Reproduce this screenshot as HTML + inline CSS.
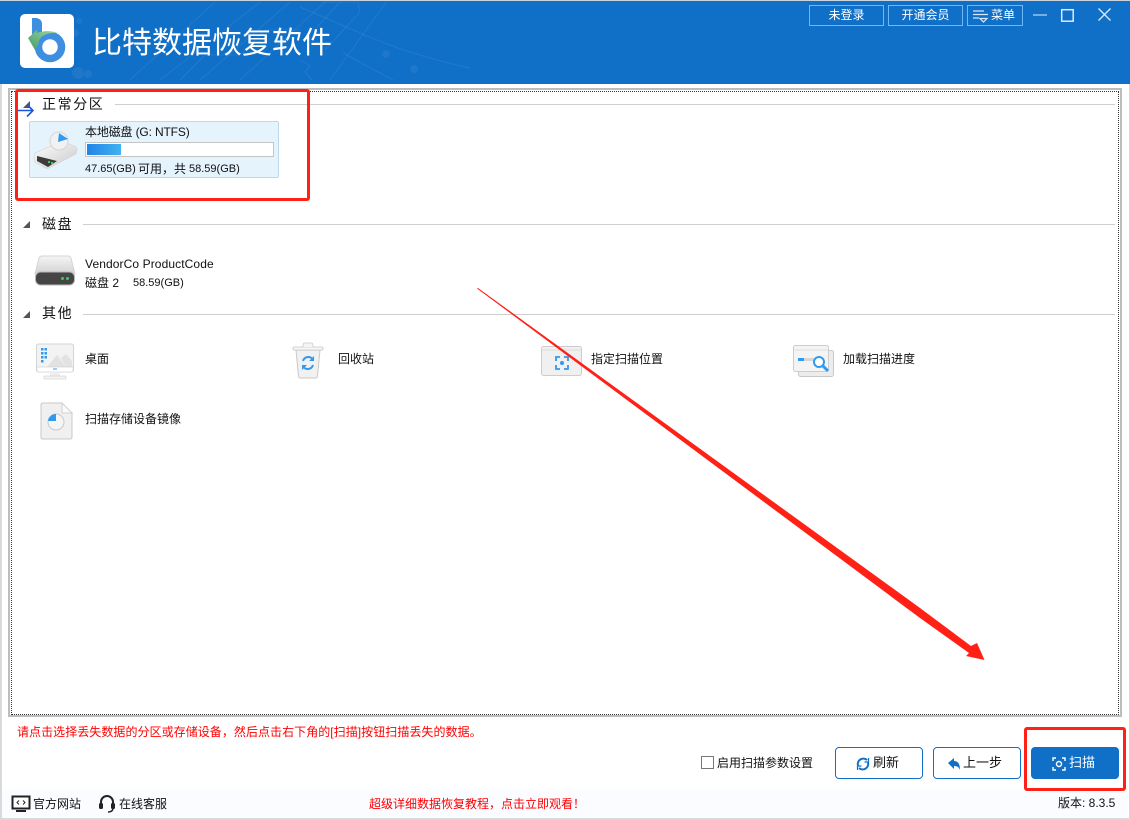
<!DOCTYPE html>
<html lang="zh">
<head>
<meta charset="utf-8">
<title>比特数据恢复软件</title>
<style>
html,body{margin:0;padding:0;background:#fff}
#app{position:relative;width:1130px;height:820px;overflow:hidden;background:#fff;font-family:"Liberation Sans","Noto Sans CJK SC",sans-serif;font-size:12px;color:#111}
#app div,#app span.t{position:absolute;white-space:nowrap;box-sizing:border-box}
.t{line-height:16px;height:16px}
.sec{font-size:14px;letter-spacing:1.6px;line-height:20px;height:20px}
.line{height:1px;background:#cfcfcf;right:15px}
.tri{width:0;height:0;border-style:solid;border-width:0 0 7px 7px;border-color:transparent transparent #555 transparent}
.topbtn{top:5px;height:21px;border:1px solid #6db8f5;color:#fff;text-align:center;line-height:19px;font-size:12px}
.btn{top:747px;width:88px;height:32px;border:1px solid #106fc7;border-radius:4px;background:#fff;line-height:30px;font-size:13px}
</style>
</head>
<body>
<div id="app">
  <!-- window frame -->
  <div style="left:0;top:0;width:1130px;height:820px;border:1px solid #d9d9d9;border-width:0 1px 2px 2px"></div>
  <!-- footer tint -->
  <div style="left:2px;top:786px;width:1127px;height:32px;background:linear-gradient(#fff,#fafcff 20%)"></div>

  <!-- header -->
  <div style="left:0;top:0;width:1130px;height:84px;background:#106fc7;border-top:1px solid #c9d4de"></div>
  <svg style="position:absolute;left:0;top:0" width="1130" height="84" viewBox="0 0 1130 84">
    <g fill="none" stroke="#fff" stroke-opacity=".08" stroke-width="1">
      <path d="M130 80L215 2M160 80L260 2M200 80L290 2M240 80L325 2"/>
      <path d="M300 7L360 33Q410 55 470 68"/>
      <path d="M387 1L330 80"/>
      <path d="M317 27L340 2M322 2L358 2L360 12L325 50"/>
      <path d="M343 53L393 80"/>
      <path d="M180 80L205 55L240 55L265 30L300 30"/>
      <path d="M300 60L310 66L305 72L312 80"/>
    </g>
    <g fill="#fff" fill-opacity=".06">
      <circle cx="79" cy="21" r="3"/><circle cx="75" cy="33" r="4"/><circle cx="78" cy="73" r="6"/><circle cx="88" cy="74" r="4"/><circle cx="386" cy="54" r="4"/><circle cx="414" cy="69" r="4"/>
    </g>
  </svg>
  <!-- logo -->
  <svg style="position:absolute;left:20px;top:14px" width="54" height="54" viewBox="0 0 54 54">
    <defs><linearGradient id="g" x1="0" y1="1" x2="1" y2="0"><stop offset="0" stop-color="#3f9c6e"/><stop offset="1" stop-color="#a6d79a"/></linearGradient></defs>
    <rect width="54" height="54" rx="5" fill="#fff"/>
    <path d="M12 4h4a6 6 0 0 1 6 6v14h-10z" fill="#3f8fe0"/>
    <circle cx="30" cy="33" r="11.500" fill="none" stroke="#3f8fe0" stroke-width="7.500"/>
    <path d="M8 24l9-8v3c8-3 15-2 21 0-7-.5-12 .5-16 3.500-2.500 2-3.500 5-4 8.500l-3 5z" fill="url(#g)"/>
  </svg>
  <div style="left:92px;top:24px;font-size:30px;line-height:40px;height:40px;color:#fff">比特数据恢复软件</div>

  <div class="topbtn" style="left:809px;width:75px">未登录</div>
  <div class="topbtn" style="left:888px;width:75px">开通会员</div>
  <div class="topbtn" style="left:967px;width:56px;padding-left:16px">菜单</div>
  <svg style="position:absolute;left:972px;top:9px" width="18" height="15" viewBox="0 0 18 15" fill="none" stroke="#d7e8f8" stroke-width="1.200">
    <path d="M1 2h11M1 5.500h15M1 9h6"/><path d="M8 9.500h7l-3.500 3.500z"/>
  </svg>
  <svg style="position:absolute;left:1030px;top:5px" width="90" height="20" viewBox="0 0 90 20" fill="none" stroke="#dceafa" stroke-width="1.300">
    <path d="M3 10h14" stroke="#9cc6ec" stroke-width="1.500"/>
    <rect x="31.700" y="4.700" width="11.500" height="11.500" stroke-width="1.500"/>
    <path d="M68.500 3.500l12 12M80.500 3.500l-12 12"/>
  </svg>

  <!-- main panel -->
  <div style="left:8px;top:88px;width:1114px;height:629px;border:2px solid #bdbdbd"></div>
  <div style="left:11px;top:91px;width:1108px;height:624px;border:1px dotted #333"></div>

  <!-- section 1 -->
  <div class="tri" style="left:23px;top:101px"></div>
  <div class="sec" style="left:42px;top:94px">正常分区</div>
  <div class="line" style="left:115px;top:104px"></div>
  <div style="left:29px;top:121px;width:250px;height:57px;background:#e5f3fd;border:1px solid #bcd8ef;border-radius:2px"></div>
  <svg style="position:absolute;left:32px;top:130px" width="46" height="40" viewBox="0 0 46 40">
    <defs><linearGradient id="d1" x1="0" y1="0" x2="1" y2="1"><stop offset="0" stop-color="#fff"/><stop offset="1" stop-color="#c9c9c9"/></linearGradient></defs>
    <path d="M3 23L28 12Q30 11 33 12L44 17Q46 19 44 24L17 38Q15 39 13 38L3 32Q1 28 3 23Z" fill="url(#d1)" stroke="#d2d2d2" stroke-width=".6"/>
    <path d="M5 26L25 31L16 37L5 31Z" fill="#3b3b3b"/>
    <rect x="16" y="31" width="2" height="2" fill="#3bd04a"/><rect x="19" y="32" width="2" height="2" fill="#3bd04a"/>
    <circle cx="27" cy="11" r="9" fill="#f1f1f1" stroke="#d5d5d5"/>
    <path d="M27 3L36 9L26 12Z" fill="#2f9af0"/>
  </svg>
  <span class="t" style="left:85px;top:124px;letter-spacing:-.15px">本地磁盘 (G: NTFS)</span>
  <div style="left:85px;top:142px;width:189px;height:15px;background:#fff;border:1px solid #c4c4c4"></div>
  <div style="left:87px;top:144px;width:34px;height:11px;background:linear-gradient(90deg,#2283e6,#3fb3f2)"></div>
  <span class="t" style="left:85px;top:161px;font-size:11px">47.65(GB)</span>
  <span class="t" style="left:138px;top:161px">可用，共</span>
  <span class="t" style="left:189px;top:161px;font-size:11px">58.59(GB)</span>

  <!-- section 2 -->
  <div class="tri" style="left:23px;top:221px"></div>
  <div class="sec" style="left:42px;top:214px">磁盘</div>
  <div class="line" style="left:83px;top:224px"></div>
  <svg style="position:absolute;left:34px;top:255px" width="42" height="32" viewBox="0 0 42 32">
    <defs><linearGradient id="d2" x1="0" y1="0" x2="0" y2="1"><stop offset="0" stop-color="#f5f5f5"/><stop offset="1" stop-color="#d2d2d2"/></linearGradient></defs>
    <path d="M8 1h26q2 0 3 2l4 16H1L5 3q1-2 3-2z" fill="url(#d2)" stroke="#d5d5d5"/>
    <rect x="1.500" y="17" width="39" height="13" rx="5" fill="#454545" stroke="#b8b8b8"/>
    <rect x="27" y="22" width="3" height="3" rx="1.500" fill="#3bd04a"/><rect x="32" y="22" width="3" height="3" rx="1.500" fill="#3bd04a"/>
  </svg>
  <span class="t" style="left:85px;top:256px;letter-spacing:.1px">VendorCo ProductCode</span>
  <span class="t" style="left:85px;top:275px">磁盘 2</span>
  <span class="t" style="left:133px;top:275px;font-size:11px">58.59(GB)</span>

  <!-- section 3 -->
  <div class="tri" style="left:23px;top:311px"></div>
  <div class="sec" style="left:42px;top:303px">其他</div>
  <div class="line" style="left:83px;top:314px"></div>

  <svg style="position:absolute;left:35px;top:343px" width="40" height="37" viewBox="0 0 40 37">
    <rect x="1.500" y="1" width="37" height="28" rx="2" fill="#f3f3f3" stroke="#d5d5d5"/>
    <path d="M12 24l10-12 9 12zM26 15l5-4 6 7v6h-6z" fill="#e2e2e2"/>
    <path d="M2 24h36v3a2 2 0 0 1-2 2H4a2 2 0 0 1-2-2z" fill="#fff" stroke="#d5d5d5" stroke-width=".7"/>
    <rect x="18" y="25.500" width="4" height="1" fill="#2f9af0"/>
    <rect x="15" y="29" width="10" height="4" fill="#eee"/><rect x="9" y="33" width="22" height="3" rx="1" fill="#f3f3f3" stroke="#d5d5d5" stroke-width=".7"/>
    <g fill="#2f9af0"><rect x="6" y="5" width="2.500" height="2.500"/><rect x="9.500" y="5" width="2.500" height="2.500"/><rect x="6" y="9" width="2.500" height="2.500"/><rect x="9.500" y="9" width="2.500" height="2.500"/><rect x="6" y="13" width="2.500" height="2.500"/><rect x="9.500" y="13" width="2.500" height="2.500"/><rect x="6" y="17" width="2.500" height="2.500"/></g>
  </svg>
  <span class="t" style="left:85px;top:351px">桌面</span>

  <svg style="position:absolute;left:292px;top:342px" width="32" height="37" viewBox="0 0 32 37">
    <path d="M4 8h24l-2.500 26q-.2 2-2 2H8.500q-1.800 0-2-2z" fill="#f1f1f1" stroke="#c9c9c9"/>
    <rect x="1" y="5" width="30" height="3" rx="1" fill="#f8f8f8" stroke="#c4c4c4" stroke-width=".8"/>
    <path d="M11 5V3q0-2 2-2h6q2 0 2 2v2" fill="#f5f5f5" stroke="#c9c9c9" stroke-width=".8"/>
    <path d="M11 19a5.500 5.500 0 0 1 9.500-2M21 23a5.500 5.500 0 0 1-9.500 2" fill="none" stroke="#2f9af0" stroke-width="2"/>
    <path d="M22 14v5h-5zM10 28v-5h5z" fill="#2f9af0"/>
  </svg>
  <span class="t" style="left:338px;top:351px">回收站</span>

  <svg style="position:absolute;left:541px;top:346px" width="42" height="31" viewBox="0 0 42 31">
    <rect x=".500" y=".500" width="40" height="29" rx="2" fill="#f0f0f0" stroke="#cdcdcd"/>
    <path d="M1 4h39" stroke="#dcdcdc"/>
    <g fill="none" stroke="#2f9af0" stroke-width="1.800"><path d="M15 15v-4h4M23 11h4v4M27 19v4h-4M19 23h-4v-4"/></g>
    <circle cx="21" cy="17" r="2" fill="#2f9af0"/>
  </svg>
  <span class="t" style="left:591px;top:351px">指定扫描位置</span>

  <svg style="position:absolute;left:793px;top:345px" width="42" height="33" viewBox="0 0 42 33">
    <rect x="5.500" y="5.500" width="35" height="26" rx="2" fill="#ececec" stroke="#c9c9c9"/>
    <rect x=".500" y=".500" width="35" height="26" rx="2" fill="#f4f4f4" stroke="#cdcdcd"/>
    <path d="M1 5h34" stroke="#dedede"/>
    <rect x="5" y="13" width="6" height="3" fill="#2f9af0"/><rect x="11" y="13" width="10" height="3" fill="#d6d6d6"/>
    <circle cx="26" cy="17" r="5" fill="#fff" stroke="#2f9af0" stroke-width="2"/>
    <path d="M30 21l5 5" stroke="#2f9af0" stroke-width="3"/>
  </svg>
  <span class="t" style="left:843px;top:351px">加载扫描进度</span>

  <svg style="position:absolute;left:40px;top:402px" width="34" height="38" viewBox="0 0 34 38">
    <path d="M3 1h19l10 10v24q0 2-2 2H3q-2 0-2-2V3q0-2 2-2z" fill="#f0f0f0" stroke="#c9c9c9"/>
    <path d="M22 1v10h10z" fill="#fafafa" stroke="#d2d2d2"/>
    <circle cx="16" cy="20" r="8" fill="#f6f6f6" stroke="#c9c9c9"/>
    <path d="M8 18a8 8 0 0 1 8-7v7z" fill="#2f9af0" transform="translate(0 1)"/>
  </svg>
  <span class="t" style="left:85px;top:411px">扫描存储设备镜像</span>

  <!-- hint -->
  <span class="t" style="left:17px;top:724px;color:#f00;letter-spacing:.05px">请点击选择丢失数据的分区或存储设备，然后点击右下角的[扫描]按钮扫描丢失的数据。</span>

  <!-- bottom actions -->
  <div style="left:701px;top:756px;width:13px;height:13px;border:1px solid #777;background:#fff"></div>
  <span class="t" style="left:717px;top:755px">启用扫描参数设置</span>
  <div class="btn" style="left:835px;padding-left:37px">刷新</div>
  <svg style="position:absolute;left:856px;top:757px" width="14" height="14" viewBox="0 0 14 14" fill="none" stroke="#106fc7" stroke-width="2">
    <path d="M2 8.500A5.500 5.500 0 0 1 11 3M12 5.500A5.500 5.500 0 0 1 3 11"/><path d="M12.500 1v4h-4M1.500 13V9h4" stroke-width="1.200"/>
  </svg>
  <div class="btn" style="left:933px;padding-left:29px">上一步</div>
  <svg style="position:absolute;left:947px;top:757px" width="14" height="14" viewBox="0 0 14 14" fill="#106fc7">
    <path d="M1 6l6-5v3c4 0 6 3 6 9-1-3-3-4-6-4v3z"/>
  </svg>
  <div class="btn" style="left:1031px;background:#106fc7;color:#fff;padding-left:37px">扫描</div>
  <svg style="position:absolute;left:1052px;top:757px" width="14" height="14" viewBox="0 0 14 14" fill="none" stroke="#fff" stroke-width="1.400">
    <path d="M1 4V1h3M10 1h3v3M13 10v3h-3M4 13H1v-3"/><circle cx="7" cy="7" r="2.500"/>
  </svg>

  <!-- footer -->
  <svg style="position:absolute;left:11px;top:795px" width="20" height="18" viewBox="0 0 20 18">
    <rect x="1.500" y="1.500" width="17" height="12" fill="#fff" stroke="#222" stroke-width="2"/>
    <path d="M5 15h10v2H5z" fill="#222"/>
    <path d="M8 5.500L6 7.500l2 2M12 5.500l2 2-2 2" fill="none" stroke="#222"/>
  </svg>
  <span class="t" style="left:33px;top:796px">官方网站</span>
  <svg style="position:absolute;left:98px;top:795px" width="18" height="18" viewBox="0 0 18 18">
    <path d="M3 9V7a6 6 0 0 1 12 0v2" fill="none" stroke="#222" stroke-width="2"/>
    <rect x="1" y="8" width="4" height="6" rx="1.500" fill="#222"/><rect x="13" y="8" width="4" height="6" rx="1.500" fill="#222"/>
    <path d="M15 14q-1 3-5 3" fill="none" stroke="#222" stroke-width="1.500"/>
  </svg>
  <span class="t" style="left:119px;top:796px">在线客服</span>
  <span class="t" style="left:369px;top:796px;color:#f00">超级详细数据恢复教程，点击立即观看！</span>
  <span class="t" style="left:1058px;top:795px">版本: 8.3.5</span>

  <!-- annotations -->
  <div style="left:15px;top:89px;width:295px;height:112px;border:3px solid #ff2016;border-radius:3px"></div>
  <div style="left:1024px;top:727px;width:102px;height:64px;border:3px solid #ff2016;border-radius:3px"></div>
  <svg style="position:absolute;left:0;top:0;pointer-events:none" width="1130" height="820" viewBox="0 0 1130 820">
    <path d="M18 110.500H32M27 104.500l6 6-6 6" fill="none" stroke="#1a55e0" stroke-width="1.600"/>
    <path d="M477 288.500L478 288L920 608L971 646L977 643L984.500 660L966 656L969 653L920 618Z" fill="#ff2016"/>
  </svg>
</div>
</body>
</html>
